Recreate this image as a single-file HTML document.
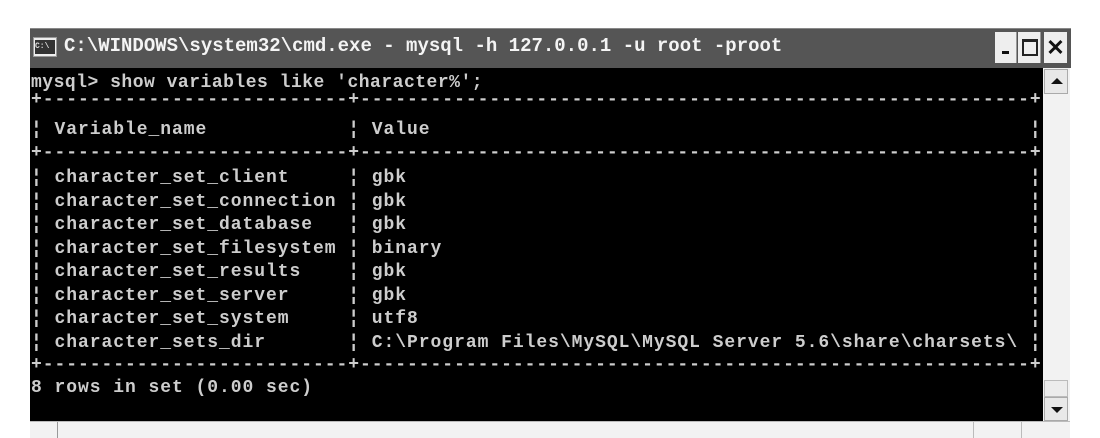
<!DOCTYPE html>
<html><head><meta charset="utf-8"><style>
html,body{margin:0;padding:0;background:#fff;width:1100px;height:438px;overflow:hidden;position:relative}
.t{position:absolute;font-family:"Liberation Mono",monospace;font-weight:bold;font-size:18px;letter-spacing:0.95px;color:#cdcdcd;white-space:pre;line-height:20px}
.rows{line-height:23.5px}
</style></head><body>
<div style="position:absolute;left:30px;top:28px;width:1041px;height:39px;background:#555;border-top:1px solid #888"></div>
<div style="position:absolute;left:33px;top:37px;width:22px;height:18px;background:#eee;border:1px solid #999"><div style="position:absolute;left:1px;top:2px;width:20px;height:14px;background:#333;color:#ddd;font:bold 8px 'Liberation Mono',monospace;line-height:14px">C:\</div></div>
<div class="t" style="left:64px;top:36px;color:#f4f4f4;font-size:19px;letter-spacing:0px">C:\WINDOWS\system32\cmd.exe - mysql -h 127.0.0.1 -u root -proot</div>
<div style="position:absolute;left:995px;top:32px;width:21px;height:31px;background:#eee;border-right:1px solid #999"><div style="position:absolute;left:7px;top:19px;width:7px;height:3px;background:#111"></div></div>
<div style="position:absolute;left:1018px;top:32px;width:22px;height:31px;background:#eee;border-right:1px solid #999"><div style="position:absolute;left:4px;top:7px;width:12px;height:12px;border:2px solid #222;border-top-width:3px"></div></div>
<div style="position:absolute;left:1044px;top:32px;width:23px;height:31px;background:#eee;color:#111;font:bold 22px 'Liberation Sans',sans-serif;text-align:center;line-height:31px">✕</div>
<div style="position:absolute;left:30px;top:68px;width:1013px;height:353px;background:#000"></div>
<div style="position:absolute;left:1043px;top:68px;width:27px;height:353px;background:#f2f2f2"></div>
<div style="position:absolute;left:1044px;top:69px;width:24px;height:25px;background:#e8e8e8;border:1px solid #aaa;box-sizing:border-box"><div style="position:absolute;left:6px;top:8px;border-left:6px solid transparent;border-right:6px solid transparent;border-bottom:6px solid #111"></div></div>
<div style="position:absolute;left:1044px;top:380px;width:24px;height:17px;background:#ececec;border:1px solid #bbb;box-sizing:border-box"></div>
<div style="position:absolute;left:1044px;top:397px;width:24px;height:24px;background:#e8e8e8;border:1px solid #aaa;box-sizing:border-box"><div style="position:absolute;left:6px;top:9px;border-left:6px solid transparent;border-right:6px solid transparent;border-top:6px solid #111"></div></div>
<div style="position:absolute;left:30px;top:421px;width:1040px;height:17px;background:#f2f2f2;border-top:1px solid #bbb"></div>
<div style="position:absolute;left:57px;top:422px;width:1px;height:16px;background:#999"></div>
<div style="position:absolute;left:973px;top:422px;width:1px;height:16px;background:#bbb"></div>
<div style="position:absolute;left:1021px;top:422px;width:1px;height:16px;background:#bbb"></div>
<div class="t" style="left:31px;top:73px;letter-spacing:0.5px">mysql&gt; show variables like 'character%';</div>
<div class="t" style="left:31px;top:90px">+--------------------------+---------------------------------------------------------+</div>
<div class="t" style="left:31px;top:120px">¦ Variable_name            ¦ Value                                                   ¦</div>
<div class="t" style="left:31px;top:143px">+--------------------------+---------------------------------------------------------+</div>
<div class="t rows" style="left:31px;top:167px">¦ character_set_client     ¦ gbk                                                     ¦
¦ character_set_connection ¦ gbk                                                     ¦
¦ character_set_database   ¦ gbk                                                     ¦
¦ character_set_filesystem ¦ binary                                                  ¦
¦ character_set_results    ¦ gbk                                                     ¦
¦ character_set_server     ¦ gbk                                                     ¦
¦ character_set_system     ¦ utf8                                                    ¦
¦ character_sets_dir       ¦ C:\Program Files\MySQL\MySQL Server 5.6\share\charsets\ ¦</div>
<div class="t" style="left:31px;top:355px">+--------------------------+---------------------------------------------------------+</div>
<div class="t" style="left:31px;top:378px">8 rows in set (0.00 sec)</div>
</body></html>
